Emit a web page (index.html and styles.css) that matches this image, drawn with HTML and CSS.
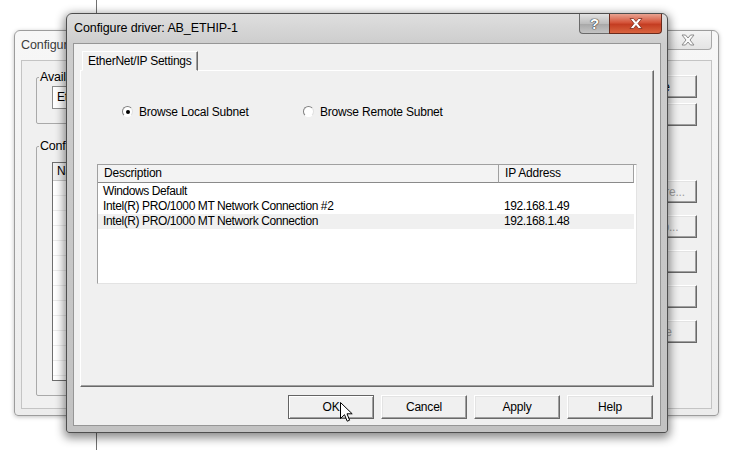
FILE: index.html
```html
<!DOCTYPE html>
<html>
<head>
    <title>Configure driver: AB_ETHIP-1</title>
    <link rel="stylesheet" href="styles.css">
</head>
<body>
    <div class="desktop-line"></div>

    <!-- Parent dialog, inactive -->
    <div class="window back-window">
        <div class="titlebar">
            <span class="title inactive">Configure Drivers</span>
            <span class="cap-btn close-inactive">
                <svg width="16" height="12" viewBox="0 0 16 12">
                    <path d="M2 1h3.5l2.5 3 2.5-3H14l-4 5 4 5h-3.5L8 8l-2.5 3H2l4-5z" fill="#fafafa" stroke="#8c8c8c" stroke-width="1"/>
                </svg>
            </span>
        </div>
        <div class="client back-client">
            <div class="back-main">
                <fieldset class="group group-types">
                    <legend>Available Driver Types:</legend>
                    <div class="combo">EtherNet/IP Driver</div>
                </fieldset>
                <fieldset class="group group-drivers">
                    <legend>Configured Drivers:</legend>
                    <div class="driver-list">
                        <div class="driver-head">Name</div>
                        <div class="driver-rows"></div>
                    </div>
                </fieldset>
            </div>
            <div class="back-buttons">
                <button class="btn back-btn">Close</button>
                <button class="btn back-btn">Help</button>
                <button class="btn back-btn disabled first-action">Configure...</button>
                <button class="btn back-btn disabled">Startup...</button>
                <button class="btn back-btn disabled">Start</button>
                <button class="btn back-btn disabled">Stop</button>
                <button class="btn back-btn disabled">Delete</button>
            </div>
        </div>
    </div>

    <!-- Driver configuration dialog -->
    <div class="window front-window">
        <div class="titlebar">
            <span class="title">Configure driver: AB_ETHIP-1</span>
            <div class="caption-buttons">
                <span class="cap-btn help">?</span>
                <span class="cap-btn close">
                    <svg width="14" height="11" viewBox="0 0 14 11">
                        <path d="M1 0.5h3.5L7 3.5l2.5-3H13L9 5.5l4 5H9.5L7 7.5l-2.5 3H1l4-5z" fill="#fff" stroke="#7a2a1a" stroke-width="0.8"/>
                    </svg>
                </span>
            </div>
        </div>
        <div class="client front-client">
            <div class="tabs">
                <div class="tab">EtherNet/IP Settings</div>
            </div>
            <div class="tab-panel">
                <div class="radio-row">
                    <label class="radio-item"><span class="radio checked"></span>Browse Local Subnet</label>
                    <label class="radio-item"><span class="radio"></span>Browse Remote Subnet</label>
                </div>
                <div class="listview">
                    <div class="lv-row lv-header">
                        <div class="lv-cell">Description</div>
                        <div class="lv-cell">IP Address</div>
                    </div>
                    <div class="lv-row">
                        <div class="lv-cell">Windows Default</div>
                        <div class="lv-cell"></div>
                    </div>
                    <div class="lv-row">
                        <div class="lv-cell">Intel(R) PRO/1000 MT Network Connection #2</div>
                        <div class="lv-cell">192.168.1.49</div>
                    </div>
                    <div class="lv-row selected">
                        <div class="lv-cell">Intel(R) PRO/1000 MT Network Connection</div>
                        <div class="lv-cell">192.168.1.48</div>
                    </div>
                </div>
            </div>
            <div class="dialog-buttons">
                <button class="btn dlg-btn default">OK</button>
                <button class="btn dlg-btn">Cancel</button>
                <button class="btn dlg-btn">Apply</button>
                <button class="btn dlg-btn">Help</button>
            </div>
        </div>
    </div>

    <svg class="cursor" width="13" height="20" viewBox="0 0 13 20">
        <path d="M0.5 0.5V16.5L4.5 12.7L7.2 19.2L9.6 18.2L7 11.8H12.2Z" fill="#fff" stroke="#000" stroke-width="1" stroke-linejoin="round"/>
    </svg>
</body>
</html>
```

FILE: styles.css
```css
body {
    margin: 0;
    width: 736px;
    height: 450px;
    position: relative;
    overflow: hidden;
    background-color: #fff;
    font-family: "Liberation Sans", Arial, sans-serif;
    font-size: 12px;
    letter-spacing: -0.2px;
    color: #000;
}

.desktop-line {
    position: absolute;
    left: 96px;
    top: 0;
    width: 1px;
    height: 450px;
    background-color: #707070;
}

/* Windows */
.window {
    position: absolute;
    box-sizing: border-box;
    display: flex;
    flex-direction: column;
    padding: 0 6px 6px;
}

.titlebar {
    display: flex;
    align-items: flex-start;
    justify-content: space-between;
    height: 29px;
    flex-shrink: 0;
}

.title {
    font-size: 12.5px;
    letter-spacing: -0.1px;
    line-height: 28px;
    padding-left: 1px;
    white-space: nowrap;
}

.title.inactive {
    color: #3c3c3c;
    padding-left: 0;
}

.client {
    flex: 1;
    box-sizing: border-box;
    background-color: #f0f0f0;
    display: flex;
}

.cap-btn {
    display: flex;
    align-items: center;
    justify-content: center;
    box-sizing: border-box;
    height: 20px;
}

/* Back window */
.back-window {
    left: 14px;
    top: 30px;
    width: 705px;
    height: 386px;
    background: linear-gradient(#f7f7f7, #ececec);
    border: 1px solid #9c9c9c;
    border-radius: 6px 6px 4px 4px;
    box-shadow: 0 1px 4px rgba(0, 0, 0, 0.25);
}

.close-inactive {
    width: 48px;
    height: 19px;
    border: 1px solid #a8a8a8;
    border-top: none;
    border-radius: 0 0 4px 4px;
    background: linear-gradient(#f4f4f4, #e4e4e4);
}

.back-client {
    border: 1px solid #c4c4c4;
    padding: 9px 14px 11px 14px;
    gap: 16px;
}

.back-main {
    flex: 1;
    display: flex;
    flex-direction: column;
}

.group {
    margin: 0;
    border: 1px solid #a9a9a9;
    border-radius: 2px;
    min-width: 0;
}

.group legend {
    padding: 0 1px;
    margin-left: -13px;
    line-height: 14px;
    font-size: 12.5px;
}

.group-types {
    padding: 2px 15px 14px;
}

.combo {
    height: 23px;
    box-sizing: border-box;
    border: 1px solid #8c8c8c;
    background-color: #fff;
    padding-left: 4px;
    line-height: 21px;
}

.group-drivers {
    margin-top: 15px;
    padding: 9px 15px 14px;
}

.driver-list {
    height: 219px;
    box-sizing: border-box;
    border: 1px solid #6e6e6e;
    background-color: #fff;
}

.driver-head {
    height: 17px;
    line-height: 17px;
    padding-left: 4px;
    background-color: #f0f0f0;
    border-bottom: 1px solid #c8c8c8;
}

.driver-rows {
    height: 199px;
    background: repeating-linear-gradient(#fff 0, #fff 14px, #ececec 14px, #ececec 15px);
}

.back-buttons {
    width: 84px;
    display: flex;
    flex-direction: column;
    gap: 5px;
    padding-top: 5px;
}

.back-btn {
    height: 23px;
}

.back-btn.first-action {
    margin-top: 49px;
}

.back-btn + .back-btn.disabled:not(.first-action) {
    margin-top: 7px;
}

.btn.disabled {
    color: #a0a0a0;
}

/* Buttons */
.btn {
    box-sizing: border-box;
    font-family: inherit;
    font-size: 12px;
    letter-spacing: -0.2px;
    color: #000;
    padding: 0;
    background-color: #f0f0f0;
    border: 1px solid;
    border-color: #fff #696969 #696969 #fff;
    box-shadow: inset -1px -1px #a0a0a0, inset 1px 1px #e3e3e3;
}

/* Front window */
.front-window {
    left: 66px;
    top: 13px;
    width: 602px;
    height: 420px;
    background: linear-gradient(#dedede, #cdcdcd 30px, #c2c2c2);
    border: 1px solid #4e4e4e;
    border-radius: 6px 6px 3px 3px;
    box-shadow: 0 3px 10px 2px rgba(0, 0, 0, 0.45);
}

.caption-buttons {
    display: flex;
    margin-right: -1px;
}

.help {
    width: 30px;
    border: 1px solid #6a6a6a;
    border-top: none;
    border-right: none;
    border-radius: 0 0 0 4px;
    background: linear-gradient(#e2e2e2, #bdbdbd 50%, #a9a9a9 55%, #c4c4c4);
    color: #fff;
    font-weight: bold;
    font-size: 15px;
    text-shadow: 0 0 1px #333, 0 0 1px #333, 0 0 1px #333;
}

.close {
    width: 53px;
    border: 1px solid #6a2a1c;
    border-top: none;
    border-radius: 0 0 4px 0;
    background: linear-gradient(#e9a391, #d4543a 45%, #c43d22 55%, #d9643f);
}

.front-client {
    flex-direction: column;
    border: 1px solid #969696;
    padding: 7px 6px 6px;
}

.tabs {
    display: flex;
    padding-left: 2px;
    position: relative;
    z-index: 1;
    margin-bottom: -1px;
}

.tab {
    width: 116px;
    height: 20px;
    box-sizing: border-box;
    padding-left: 5px;
    line-height: 18px;
    letter-spacing: -0.25px;
    background-color: #f0f0f0;
    border: 1px solid;
    border-color: #fff #696969 #f0f0f0 #fff;
    box-shadow: inset -1px 0 #a0a0a0;
}

.tab-panel {
    flex: 1;
    box-sizing: border-box;
    border: 1px solid;
    border-color: #fff #696969 #696969 #fff;
    box-shadow: inset -1px -1px #a0a0a0;
    padding: 34px 16px 0 16px;
}

.radio-row {
    display: flex;
    height: 13px;
    align-items: center;
    padding-left: 25px;
}

.radio-item {
    display: flex;
    align-items: center;
    gap: 6px;
}

.radio-item:first-child {
    width: 181px;
}

.radio {
    width: 11px;
    height: 11px;
    box-sizing: border-box;
    border-radius: 50%;
    border: 1px solid;
    border-color: #808080 #e0e0e0 #fff #808080;
    background-color: #fff;
    display: flex;
    align-items: center;
    justify-content: center;
}

.radio.checked::after {
    content: "";
    width: 4px;
    height: 4px;
    border-radius: 50%;
    background-color: #000;
}

.listview {
    margin-top: 46px;
    height: 120px;
    box-sizing: border-box;
    border: 1px solid;
    border-color: #a0a0a0 #e3e3e3 #e3e3e3 #a0a0a0;
    background-color: #fff;
    letter-spacing: -0.4px;
}

.lv-row {
    display: grid;
    grid-template-columns: 401px 135px;
    height: 15px;
    line-height: 15px;
    width: 536px;
}

.lv-row .lv-cell {
    padding-left: 5px;
    white-space: nowrap;
    overflow: hidden;
}

.lv-header {
    height: 18px;
    line-height: 17px;
    margin-bottom: 1px;
}

.lv-header .lv-cell {
    background-color: #f3f3f3;
    border-bottom: 1px solid #8a8a8a;
    border-right: 1px solid #a0a0a0;
    padding-left: 6px;
    letter-spacing: -0.2px;
}

.lv-row.selected {
    background-color: #f0f0f0;
}

.dialog-buttons {
    display: flex;
    justify-content: flex-end;
    gap: 7px;
    margin-top: 8px;
    padding-right: 1px;
}

.dlg-btn {
    width: 86px;
    height: 24px;
}

.dlg-btn.default {
    border-color: #646464;
    box-shadow: inset 1px 1px #fff, inset -1px -1px #a0a0a0;
}

.cursor {
    position: absolute;
    left: 340px;
    top: 402px;
}
```
